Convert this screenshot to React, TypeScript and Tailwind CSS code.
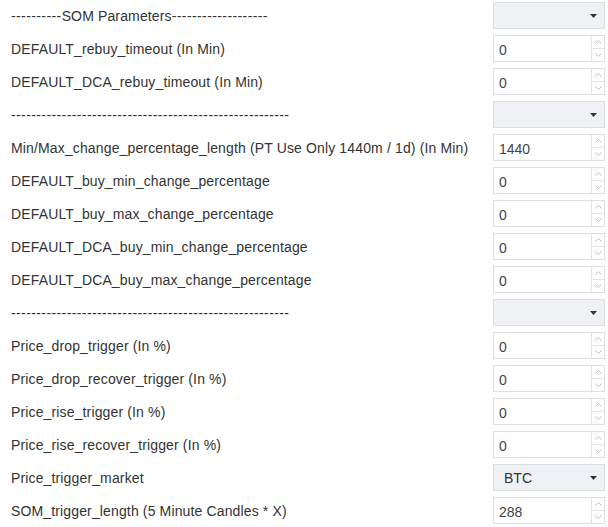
import React from "react";

type Row = { label: string; kind: "select" | "input"; value?: string };

const rows: Row[] = [
  { label: "----------SOM Parameters-------------------", kind: "select" },
  { label: "DEFAULT_rebuy_timeout (In Min)", kind: "input", value: "0" },
  { label: "DEFAULT_DCA_rebuy_timeout (In Min)", kind: "input", value: "0" },
  { label: "-------------------------------------------------------", kind: "select" },
  { label: "Min/Max_change_percentage_length (PT Use Only 1440m / 1d) (In Min)", kind: "input", value: "1440" },
  { label: "DEFAULT_buy_min_change_percentage", kind: "input", value: "0" },
  { label: "DEFAULT_buy_max_change_percentage", kind: "input", value: "0" },
  { label: "DEFAULT_DCA_buy_min_change_percentage", kind: "input", value: "0" },
  { label: "DEFAULT_DCA_buy_max_change_percentage", kind: "input", value: "0" },
  { label: "-------------------------------------------------------", kind: "select" },
  { label: "Price_drop_trigger (In %)", kind: "input", value: "0" },
  { label: "Price_drop_recover_trigger (In %)", kind: "input", value: "0" },
  { label: "Price_rise_trigger (In %)", kind: "input", value: "0" },
  { label: "Price_rise_recover_trigger (In %)", kind: "input", value: "0" },
  { label: "Price_trigger_market", kind: "select", value: "BTC" },
  { label: "SOM_trigger_length (5 Minute Candles * X)", kind: "input", value: "288" },
];

function Label({ text }: { text: string }) {
  const parts = text.split(/(-{3,})/);
  return (
    <>
      {parts.map((p, i) =>
        /^-{3,}$/.test(p) ? (
          <span key={i} className="tracking-[0.4px]">
            {p}
          </span>
        ) : (
          <span key={i}>{p}</span>
        )
      )}
    </>
  );
}

function Caret() {
  return (
    <svg width="7" height="4" viewBox="0 0 7 4" className="shrink-0">
      <path d="M0 0 H7 L3.5 4 Z" fill="#333" />
    </svg>
  );
}

function Spinner() {
  return (
    <div className="flex flex-col w-[13px] border-l border-[#e3e3e3] h-full">
      <div className="flex-1 flex items-center justify-center border-b border-[#e3e3e3]">
        <svg width="7" height="4" viewBox="0 0 7 4">
          <path d="M0.5 3.5 L3.5 0.5 L6.5 3.5" fill="none" stroke="#b8bcc4" strokeWidth="1" />
        </svg>
      </div>
      <div className="flex-1 flex items-center justify-center">
        <svg width="7" height="4" viewBox="0 0 7 4">
          <path d="M0.5 0.5 L3.5 3.5 L6.5 0.5" fill="none" stroke="#b8bcc4" strokeWidth="1" />
        </svg>
      </div>
    </div>
  );
}

export default function App() {
  return (
    <div
      className="w-[608px] h-[527px] bg-white overflow-hidden text-[#333]"
      style={{ fontFamily: '"Liberation Sans", Arial, sans-serif' }}
    >
      {rows.map((r, i) => (
        <div key={i} className="flex h-[33px] pt-[2px]">
          <div className="flex-1 pl-[11px] pt-[2px] h-[27px] flex items-center text-[14px] tracking-[0.14px] whitespace-nowrap">
            <Label text={r.label} />
          </div>
          {r.kind === "select" ? (
            <div className="w-[112px] h-[27px] mr-[3px] bg-[#eff1f5] border border-[#dcdfe4] flex items-center justify-between pl-[10px] pr-[7px] text-[14px]">
              <span className="pt-[2px]">{r.value ?? ""}</span>
              <Caret />
            </div>
          ) : (
            <div className="w-[112px] h-[27px] mr-[3px] border border-[#dcdfe4] bg-white flex items-center">
              <div className="flex-1 pl-[5px] pt-[4px] text-[14px] text-[#444]">{r.value}</div>
              <Spinner />
            </div>
          )}
        </div>
      ))}
    </div>
  );
}
